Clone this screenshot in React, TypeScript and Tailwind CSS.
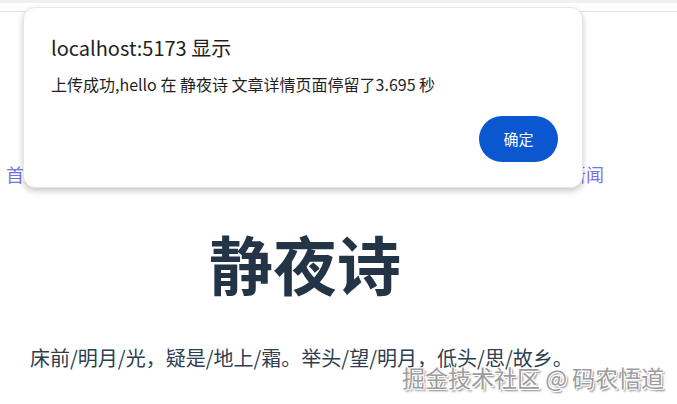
import React from 'react';

const cjk = '"Noto Sans CJK SC", "Noto Sans", sans-serif';

const App: React.FC = () => {
  return (
    <div className="relative w-[677px] h-[404px] overflow-hidden bg-white" style={{ fontFamily: cjk }}>
      {/* browser top strip */}
      <div className="h-[3px] bg-[#eef0f2]" />
      <div className="h-[8px]" />
      <div className="h-px bg-[#e3e3e3]" />

      {/* page content behind dialog */}
      <nav className="w-[610px] flex justify-between px-[6px] pt-[150px] text-[18px] leading-[24px] text-[#7474e4]">
        <span>首页</span>
        <span>新闻</span>
      </nav>

      <h1 className="w-[610px] mt-[36px] text-center text-[64px] leading-[80px] font-bold text-[#243447]">静夜诗</h1>

      <p className="mt-[44px] pl-[30px] text-[20px] leading-[24px] text-[#2c3e50]">
        床前/明月/光，疑是/地上/霜。举头/望/明月，低头/思/故乡。
      </p>

      {/* alert dialog */}
      <div className="absolute left-[23px] top-[7px] w-[560px] h-[181px] rounded-[12px] bg-white border border-[#e6e6e6] shadow-[0_3px_6px_rgba(0,0,0,0.22)] px-[27px] pt-[27px]">
        <div className="text-[20px] leading-[26px] text-[#1f1f1f]">localhost:5173 显示</div>
        <div className="mt-[12px] text-[16px] leading-[22px] text-[#1f1f1f]">上传成功,hello 在 静夜诗 文章详情页面停留了3.695 秒</div>
        <div className="flex justify-end mt-[21px]">
          <button className="w-[79px] h-[46px] rounded-full bg-[#0b57d0] text-white text-[15px] -mr-[3px]">确定</button>
        </div>
      </div>

      {/* watermark */}
      <div className="absolute left-[402px] top-[362px] text-[23px] leading-[30px] text-[#9c9c9c] [text-shadow:1px_1px_0_#ffffff,-1px_-1px_0_#ffffff,1px_-1px_0_#fff,-1px_1px_0_#fff,2px_2px_2px_#777]">
        掘金技术社区 @ 码农悟道
      </div>
    </div>
  );
};

export default App;
